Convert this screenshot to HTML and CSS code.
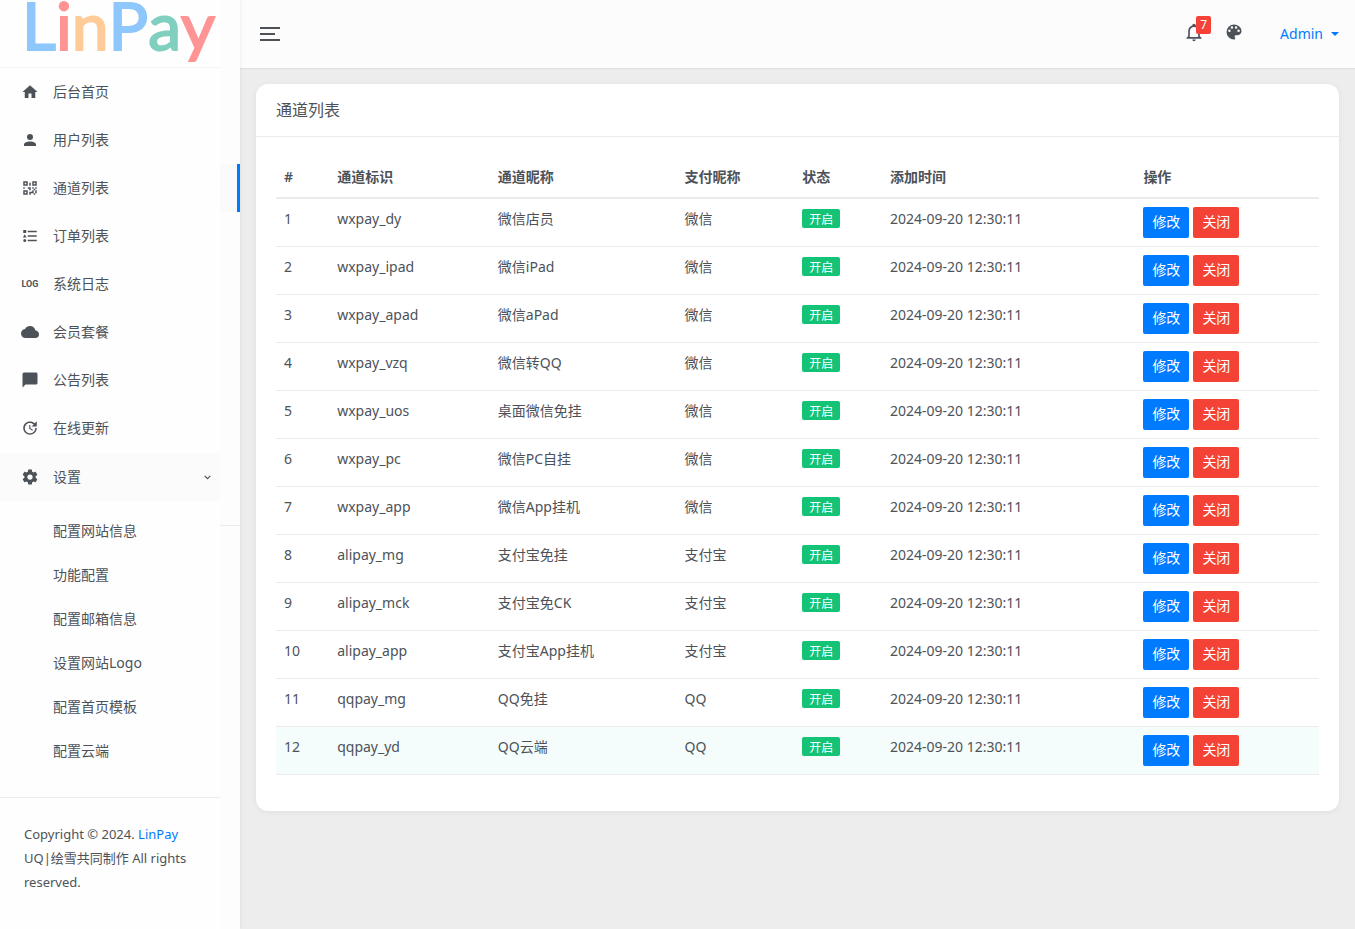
FILE: index.html
```html
<!DOCTYPE html>
<html lang="zh-CN">
<head>
<meta charset="utf-8">
<title>通道列表 - LinPay</title>
<link rel="stylesheet" href="styles.css">
</head>
<body>
<div class="app">
  <aside class="sidebar">
    <div class="sidebar-inner">
      <a class="logo" href="#" aria-label="LinPay"><span class="blue">L</span><span class="red">i</span><span class="orange">n</span><span class="blue">P</span><span class="green">a</span><span class="red">y</span></a>
      <nav>
        <ul class="menu">
          <li><a href="#"><svg class="icon" viewBox="0 0 24 24"><path d="M10,20V14H14V20H19V12H22L12,3L2,12H5V20H10Z"/></svg>后台首页</a></li>
          <li><a href="#"><svg class="icon" viewBox="0 0 24 24"><path d="M12,4A4,4 0 0,1 16,8A4,4 0 0,1 12,12A4,4 0 0,1 8,8A4,4 0 0,1 12,4M12,14C16.42,14 20,15.79 20,18V20H4V18C4,15.79 7.58,14 12,14Z"/></svg>用户列表</a></li>
          <li><a href="#"><svg class="icon" viewBox="0 0 24 24"><path d="M3,11H5V13H3V11M11,5H13V9H11V5M9,11H13V15H11V13H9V11M15,11H17V13H19V11H21V13H19V15H21V19H19V21H17V19H13V21H11V17H15V15H17V13H15V11M19,19V15H17V19H19M15,3H21V9H15V3M17,5V7H19V5H17M3,3H9V9H3V3M5,5V7H7V5H5M3,15H9V21H3V15M5,17V19H7V17H5Z"/></svg>通道列表</a></li>
          <li><a href="#"><svg class="icon" viewBox="0 0 24 24"><path d="M5,9.5L7.5,14H2.5L5,9.5M3,4H7V8H3V4M5,20A2,2 0 0,0 7,18A2,2 0 0,0 5,16A2,2 0 0,0 3,18A2,2 0 0,0 5,20M9,5V7H21V5H9M9,19H21V17H9V19M9,13H21V11H9V13Z"/></svg>订单列表</a></li>
          <li><a href="#"><span class="icon icon-log">LOG</span>系统日志</a></li>
          <li><a href="#"><svg class="icon" viewBox="0 0 24 24"><path d="M19.35,10.03C18.67,6.59 15.64,4 12,4C9.11,4 6.6,5.64 5.35,8.03C2.34,8.36 0,10.9 0,14A6,6 0 0,0 6,20H19A5,5 0 0,0 24,15C24,12.36 21.95,10.22 19.35,10.03Z"/></svg>会员套餐</a></li>
          <li><a href="#"><svg class="icon" viewBox="0 0 24 24"><path d="M20,2H4A2,2 0 0,0 2,4V22L6,18H20A2,2 0 0,0 22,16V4C22,2.89 21.1,2 20,2Z"/></svg>公告列表</a></li>
          <li><a href="#"><svg class="icon" viewBox="0 0 24 24"><path d="M21,10.12H14.22L16.96,7.3C14.23,4.6 9.81,4.5 7.08,7.2C4.35,9.91 4.35,14.28 7.08,17C9.81,19.7 14.23,19.7 16.96,17C18.32,15.65 19,14.08 19,12.1H21C21,14.08 20.12,16.65 18.36,18.39C14.85,21.87 9.15,21.87 5.64,18.39C2.14,14.92 2.11,9.28 5.62,5.81C9.13,2.34 14.76,2.34 18.27,5.81L21,3V10.12M12.5,8V12.25L16,14.33L15.28,15.54L11,13V8H12.5Z"/></svg>在线更新</a></li>
          <li class="open"><a href="#"><svg class="icon" viewBox="0 0 24 24"><path d="M12,15.5A3.5,3.5 0 0,1 8.5,12A3.5,3.5 0 0,1 12,8.5A3.5,3.5 0 0,1 15.5,12A3.5,3.5 0 0,1 12,15.5M19.43,12.97C19.47,12.65 19.5,12.33 19.5,12C19.5,11.67 19.47,11.34 19.43,11L21.54,9.37C21.73,9.22 21.78,8.95 21.66,8.73L19.66,5.27C19.54,5.05 19.27,4.96 19.05,5.05L16.56,6.05C16.04,5.66 15.5,5.32 14.87,5.07L14.5,2.42C14.46,2.18 14.25,2 14,2H10C9.75,2 9.54,2.18 9.5,2.42L9.13,5.07C8.5,5.32 7.96,5.66 7.44,6.05L4.95,5.05C4.73,4.96 4.46,5.05 4.34,5.27L2.34,8.73C2.21,8.95 2.27,9.22 2.46,9.37L4.57,11C4.53,11.34 4.5,11.67 4.5,12C4.5,12.33 4.53,12.65 4.57,12.97L2.46,14.63C2.27,14.78 2.21,15.05 2.34,15.27L4.34,18.73C4.46,18.95 4.73,19.03 4.95,18.95L7.44,17.94C7.96,18.34 8.5,18.68 9.13,18.93L9.5,21.58C9.54,21.82 9.75,22 10,22H14C14.25,22 14.46,21.82 14.5,21.58L14.87,18.93C15.5,18.67 16.04,18.34 16.56,17.94L19.05,18.95C19.27,19.03 19.54,18.95 19.66,18.73L21.66,15.27C21.78,15.05 21.73,14.78 21.54,14.63L19.43,12.97Z"/></svg>设置<svg class="chevron" viewBox="0 0 8 8"><path d="M1.5 2.5L4 5L6.500 2.5"/></svg></a>
            <ul class="submenu">
              <li><a href="#">配置网站信息</a></li>
              <li><a href="#">功能配置</a></li>
              <li><a href="#">配置邮箱信息</a></li>
              <li><a href="#">设置网站Logo</a></li>
              <li><a href="#">配置首页模板</a></li>
              <li><a href="#">配置云端</a></li>
            </ul>
          </li>
        </ul>
      </nav>
      <footer class="copyright">Copyright © 2024. <a href="#">LinPay</a> UQ|绘雪共同制作 All rights reserved.</footer>
    </div>
    <div class="rail"><div class="rail-active"></div><div class="rail-line"></div></div>
  </aside>
  <div class="page">
    <header class="topbar">
      <button class="toggler" type="button" aria-label="菜单"><span></span><span></span><span></span></button>
      <div class="tools">
        <button class="tool" type="button" aria-label="通知"><svg viewBox="0 0 24 24"><path d="M10 21H14C14 22.1 13.1 23 12 23S10 22.1 10 21M21 19V20H3V19L5 17V11C5 7.900 7 5.200 10 4.300V4C10 2.900 10.900 2 12 2S14 2.900 14 4V4.300C17 5.200 19 7.900 19 11V17L21 19M17 11C17 8.200 14.800 6 12 6S7 8.200 7 11V18H17V11Z"/></svg><span class="count">7</span></button>
        <button class="tool" type="button" aria-label="主题"><svg viewBox="0 0 24 24"><path d="M17.5,12A1.5,1.5 0 0,1 16,10.5A1.5,1.5 0 0,1 17.5,9A1.5,1.5 0 0,1 19,10.5A1.5,1.5 0 0,1 17.5,12M14.5,8A1.5,1.5 0 0,1 13,6.5A1.5,1.5 0 0,1 14.5,5A1.5,1.5 0 0,1 16,6.5A1.5,1.5 0 0,1 14.5,8M9.5,8A1.5,1.5 0 0,1 8,6.5A1.5,1.5 0 0,1 9.5,5A1.5,1.5 0 0,1 11,6.5A1.5,1.5 0 0,1 9.5,8M6.5,12A1.5,1.5 0 0,1 5,10.5A1.5,1.5 0 0,1 6.5,9A1.5,1.5 0 0,1 8,10.5A1.5,1.5 0 0,1 6.5,12M12,3A9,9 0 0,0 3,12A9,9 0 0,0 12,21A1.5,1.5 0 0,0 13.5,19.5C13.5,19.11 13.35,18.76 13.11,18.5C12.88,18.23 12.73,17.88 12.73,17.5A1.5,1.5 0 0,1 14.23,16H16A5,5 0 0,0 21,11C21,6.58 16.97,3 12,3Z"/></svg></button>
        <a class="user" href="#">Admin<span class="caret"></span></a>
      </div>
    </header>
    <main class="content">
      <section class="card">
        <h1>通道列表</h1>
        <div class="card-body">
          <table>
            <colgroup><col class="c-id"><col class="c-key"><col class="c-name"><col class="c-pay"><col class="c-state"><col class="c-time"><col class="c-ops"></colgroup>
            <thead><tr><th>#</th><th>通道标识</th><th>通道昵称</th><th>支付昵称</th><th>状态</th><th>添加时间</th><th>操作</th></tr></thead>
            <tbody>
              <tr><td>1</td><td>wxpay_dy</td><td>微信店员</td><td>微信</td><td><span class="badge">开启</span></td><td>2024-09-20 12:30:11</td><td><div class="ops"><button type="button" class="btn edit">修改</button><button type="button" class="btn close">关闭</button></div></td></tr>
              <tr><td>2</td><td>wxpay_ipad</td><td>微信iPad</td><td>微信</td><td><span class="badge">开启</span></td><td>2024-09-20 12:30:11</td><td><div class="ops"><button type="button" class="btn edit">修改</button><button type="button" class="btn close">关闭</button></div></td></tr>
              <tr><td>3</td><td>wxpay_apad</td><td>微信aPad</td><td>微信</td><td><span class="badge">开启</span></td><td>2024-09-20 12:30:11</td><td><div class="ops"><button type="button" class="btn edit">修改</button><button type="button" class="btn close">关闭</button></div></td></tr>
              <tr><td>4</td><td>wxpay_vzq</td><td>微信转QQ</td><td>微信</td><td><span class="badge">开启</span></td><td>2024-09-20 12:30:11</td><td><div class="ops"><button type="button" class="btn edit">修改</button><button type="button" class="btn close">关闭</button></div></td></tr>
              <tr><td>5</td><td>wxpay_uos</td><td>桌面微信免挂</td><td>微信</td><td><span class="badge">开启</span></td><td>2024-09-20 12:30:11</td><td><div class="ops"><button type="button" class="btn edit">修改</button><button type="button" class="btn close">关闭</button></div></td></tr>
              <tr><td>6</td><td>wxpay_pc</td><td>微信PC自挂</td><td>微信</td><td><span class="badge">开启</span></td><td>2024-09-20 12:30:11</td><td><div class="ops"><button type="button" class="btn edit">修改</button><button type="button" class="btn close">关闭</button></div></td></tr>
              <tr><td>7</td><td>wxpay_app</td><td>微信App挂机</td><td>微信</td><td><span class="badge">开启</span></td><td>2024-09-20 12:30:11</td><td><div class="ops"><button type="button" class="btn edit">修改</button><button type="button" class="btn close">关闭</button></div></td></tr>
              <tr><td>8</td><td>alipay_mg</td><td>支付宝免挂</td><td>支付宝</td><td><span class="badge">开启</span></td><td>2024-09-20 12:30:11</td><td><div class="ops"><button type="button" class="btn edit">修改</button><button type="button" class="btn close">关闭</button></div></td></tr>
              <tr><td>9</td><td>alipay_mck</td><td>支付宝免CK</td><td>支付宝</td><td><span class="badge">开启</span></td><td>2024-09-20 12:30:11</td><td><div class="ops"><button type="button" class="btn edit">修改</button><button type="button" class="btn close">关闭</button></div></td></tr>
              <tr><td>10</td><td>alipay_app</td><td>支付宝App挂机</td><td>支付宝</td><td><span class="badge">开启</span></td><td>2024-09-20 12:30:11</td><td><div class="ops"><button type="button" class="btn edit">修改</button><button type="button" class="btn close">关闭</button></div></td></tr>
              <tr><td>11</td><td>qqpay_mg</td><td>QQ免挂</td><td>QQ</td><td><span class="badge">开启</span></td><td>2024-09-20 12:30:11</td><td><div class="ops"><button type="button" class="btn edit">修改</button><button type="button" class="btn close">关闭</button></div></td></tr>
              <tr class="hovered"><td>12</td><td>qqpay_yd</td><td>QQ云端</td><td>QQ</td><td><span class="badge">开启</span></td><td>2024-09-20 12:30:11</td><td><div class="ops"><button type="button" class="btn edit">修改</button><button type="button" class="btn close">关闭</button></div></td></tr>
            </tbody>
          </table>
        </div>
      </section>
    </main>
  </div>
</div>
</body>
</html>
```
FILE: styles.css
```css
* { box-sizing: border-box; }
body {
  margin: 0;
  background: #ededed;
  color: #4d5259;
  font: 14px/24px "Noto Sans", "Noto Sans CJK SC", sans-serif;
}
a { color: inherit; text-decoration: none; }
button { font: inherit; border: 0; padding: 0; background: none; cursor: pointer; }
ul { list-style: none; margin: 0; padding: 0; }

.app { display: flex; min-height: 100vh; }

.sidebar {
  display: flex;
  flex: none;
  width: 240px;
  background: #fdfdfd;
  box-shadow: 0 0 4px rgba(0, 0, 0, .08);
  z-index: 1;
}
.sidebar-inner { flex: 1; background: #fefefe; }
.rail { width: 20px; padding-top: 164px; }
.rail-active { height: 48px; background: #fafafa; border-right: 3px solid #007bff; }
.rail-line { margin-top: 313px; border-top: 1px solid #ebebeb; }

.logo {
  display: flex;
  height: 68px;
  padding-left: 22px;
  border-bottom: 1px solid #f4f4f4;
  font: 66px/50px Lato, sans-serif;
  -webkit-text-stroke: 2px currentColor;
}
.blue { color: #8ec7fc; }
.red { color: #ff9494; }
.orange { color: #ffcc99; }
.green { color: #80cfbf; }

.menu a { display: flex; align-items: center; height: 48px; padding: 0 8px 0 21px; }
.icon { flex: none; width: 18px; height: 18px; margin-right: 14px; fill: #4d5259; }
.icon-log { font: 700 9px/18px Roboto, sans-serif; text-align: center; }
.open { padding-top: 1px; }
.menu .open > a { background: #fbfbfb; }
.chevron { width: 9px; height: 9px; margin-left: auto; fill: none; stroke: #4d5259; }
.submenu { padding: 8px 0 24px; }
.menu .submenu a { height: 44px; padding-left: 53px; }
.copyright { padding: 24px; border-top: 1px solid #ebebeb; font-size: 13px; }
.copyright a { color: #007bff; }

.page { flex: 1; min-width: 0; }
.topbar {
  display: flex;
  align-items: center;
  justify-content: space-between;
  height: 68px;
  padding: 0 16px 0 20px;
  background: #fcfcfc;
  box-shadow: 0 1px 1px rgba(0, 0, 0, .05);
}
.toggler { display: flex; flex-direction: column; gap: 4px; width: 20px; }
.toggler span { height: 2px; width: 20px; background: #4d5259; }
.toggler span:nth-child(2) { width: 15px; }
.tools { display: flex; align-items: center; gap: 20px; }
.tool { position: relative; height: 24px; padding-bottom: 4px; color: #fff; }
.tool svg { display: block; width: 20px; height: 20px; fill: #4d5259; }
.count {
  position: absolute;
  left: 12px;
  top: -6px;
  width: 15px;
  border-radius: 2px;
  background: #f44336;
  font-size: 12px;
  line-height: 18px;
}
.user { display: flex; align-items: center; gap: 8px; margin-left: 16px; color: #007bff; }
.caret { border: 4px solid transparent; border-top-color: currentColor; border-bottom: 0; }

.content { padding: 16px; }
.card { border-radius: 12px; background: #fff; box-shadow: 0 1px 6px rgba(0, 0, 0, .06); }
h1 {
  margin: 0;
  padding: 14px 20px;
  border-bottom: 1px solid #ebebeb;
  font-size: 16px;
  font-weight: 400;
  line-height: 24px;
}
.card-body { padding: 20px 20px 36px; }
table { width: 100%; table-layout: fixed; border-collapse: separate; border-spacing: 0; }
.c-id { width: 5.1%; }
.c-key { width: 15.4%; }
.c-name { width: 17.9%; }
.c-pay { width: 11.3%; }
.c-state { width: 8.4%; }
.c-time { width: 24.3%; }
th, td { padding: 8px; text-align: left; vertical-align: top; border-bottom: 1px solid #ebebeb; }
th { border-bottom-width: 2px; font-weight: 600; }
.hovered { background: #f4fdfb; }
.badge {
  display: block;
  width: 38px;
  margin-top: 2px;
  padding-top: 2px;
  border-radius: 2px;
  background: #15c377;
  color: #fff;
  font-size: 12px;
  line-height: 17px;
  text-align: center;
}
.ops { display: flex; gap: 4px; }
.btn { width: 46px; padding-bottom: 2px; border-radius: 2px; color: #fff; line-height: 29px; }
.edit { background: #007bff; }
.close { background: #f44336; }
```
